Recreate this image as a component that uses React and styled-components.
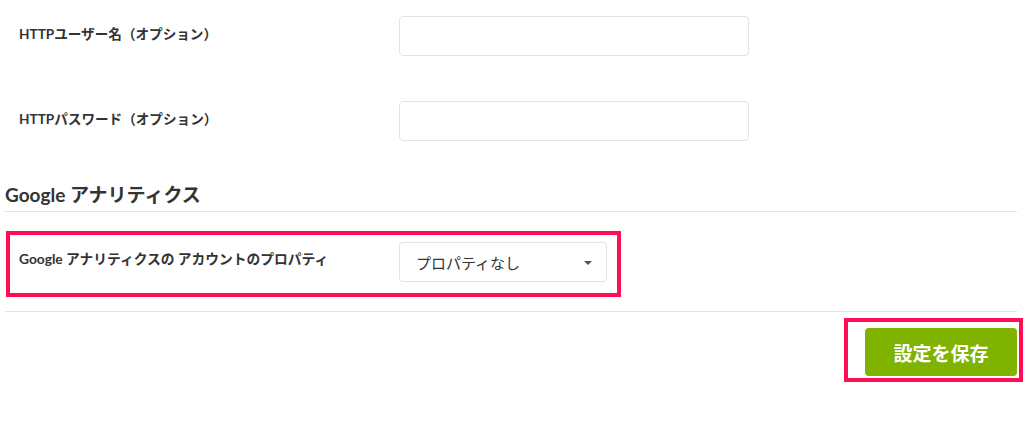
import React from "react";
import styled, { createGlobalStyle } from "styled-components";

const GlobalStyle = createGlobalStyle`
  html, body {
    margin: 0;
    padding: 0;
    background: #ffffff;
  }
  body {
    font-family: Lato, "Noto Sans CJK JP", "Noto Sans", sans-serif;
    color: #333333;
  }
  * { box-sizing: border-box; }
`;

const Page = styled.div`
  width: 1024px;
  padding: 16px 7px 0 5px;
`;

const FieldRow = styled.div`
  display: grid;
  grid-template-columns: ${(p) => p.$labelWidth}px ${(p) => p.$fieldWidth}px;
  align-items: start;
  margin-bottom: ${(p) => p.$gap || 0}px;
`;

const Label = styled.label`
  display: block;
  padding: ${(p) => p.$top}px 0 0 ${(p) => p.$left}px;
  font-size: ${(p) => p.$size || 13.6}px;
  line-height: 20px;
  font-weight: 700;
  color: #333333;
  white-space: nowrap;
`;

const TextInput = styled.input`
  display: block;
  width: 100%;
  height: 40px;
  border: 1px solid #e3e3e3;
  border-radius: 4px;
  background: #ffffff;
  padding: 0 12px;
  font: inherit;
  outline: none;
`;

const SectionTitle = styled.h2`
  margin: 42px 0 0;
  padding: 0 0 4px;
  font-size: 19px;
  line-height: 24px;
  font-weight: 700;
  color: #333333;
  border-bottom: 1px solid #e2e2e2;
`;

const Highlight = styled.div`
  border: 4px solid #ff0d55;
  margin: ${(p) => p.$margin};
  padding: ${(p) => p.$padding};
`;

const SelectBox = styled.div`
  position: relative;
  display: flex;
  align-items: center;
  height: 40px;
  border: 1px solid #e3e3e3;
  border-radius: 4px;
  background: #ffffff;
  padding: 0 16px;
  font-size: 15px;
  color: #333333;
`;

const Caret = styled.span`
  position: absolute;
  right: 14px;
  top: 18px;
  width: 0;
  height: 0;
  border-left: 4px solid transparent;
  border-right: 4px solid transparent;
  border-top: 4px solid #555555;
`;

const Divider = styled.hr`
  margin: 14px 0 0;
  border: 0;
  border-top: 1px solid #e2e2e2;
  height: 0;
`;

const Actions = styled.div`
  display: flex;
  justify-content: flex-end;
  margin: 6px -6px 0 0;
`;

const SaveButton = styled.button`
  width: 152px;
  height: 48px;
  border: 0;
  border-radius: 4px;
  background: #7fb300;
  color: #ffffff;
  font-family: Lato, "Noto Sans CJK JP", sans-serif;
  font-size: 19px;
  font-weight: 700;
  cursor: pointer;
`;

export default function App() {
  return (
    <>
      <GlobalStyle />
      <Page>
        <FieldRow $labelWidth={394} $fieldWidth={350} $gap={45}>
          <Label $top={8} $left={14}>HTTPユーザー名（オプション）</Label>
          <TextInput type="text" />
        </FieldRow>
        <FieldRow $labelWidth={394} $fieldWidth={350}>
          <Label $top={8} $left={14}>HTTPパスワード（オプション）</Label>
          <TextInput type="password" />
        </FieldRow>

        <SectionTitle>Google アナリティクス</SectionTitle>

        <Highlight $margin="19px 0 0 1px" $padding="7px 0 11px 0" style={{ width: 615 }}>
          <FieldRow $labelWidth={389} $fieldWidth={208}>
            <Label $top={7} $left={9} $size={13.75}>Google アナリティクスの アカウントのプロパティ</Label>
            <SelectBox>
              プロパティなし
              <Caret />
            </SelectBox>
          </FieldRow>
        </Highlight>

        <Divider />

        <Actions>
          <Highlight $margin="0" $padding="6px 2px 2px 17px">
            <SaveButton type="button">設定を保存</SaveButton>
          </Highlight>
        </Actions>
      </Page>
    </>
  );
}
